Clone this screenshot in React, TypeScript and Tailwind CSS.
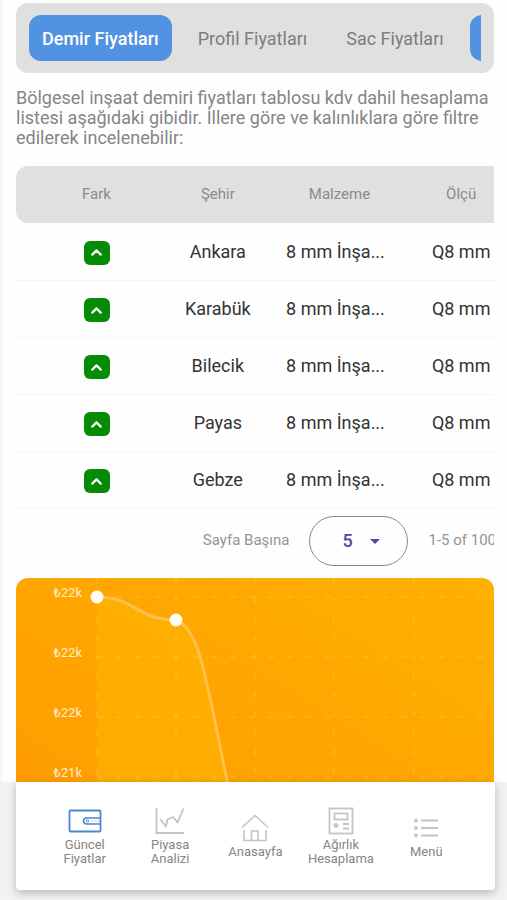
import { useState } from 'react';
import { ChevronUp } from 'lucide-react';

const tabs = ['Demir Fiyatları', 'Profil Fiyatları', 'Sac Fiyatları'];

const rows = [
  { city: 'Ankara', material: '8 mm İnşa...', size: 'Q8 mm' },
  { city: 'Karabük', material: '8 mm İnşa...', size: 'Q8 mm' },
  { city: 'Bilecik', material: '8 mm İnşa...', size: 'Q8 mm' },
  { city: 'Payas', material: '8 mm İnşa...', size: 'Q8 mm' },
  { city: 'Gebze', material: '8 mm İnşa...', size: 'Q8 mm' },
];

const chartLabels = [
  { y: 18, text: '₺22k' },
  { y: 78, text: '₺22k' },
  { y: 138, text: '₺22k' },
  { y: 198, text: '₺21k' },
];

function WalletIcon() {
  return (
    <svg width="34" height="24" viewBox="0 0 34 24" fill="none" stroke="#4a87d0" strokeWidth="1.8">
      <rect x="1.5" y="1.5" width="31" height="21" rx="1" />
      <path d="M32 9H18.500a3 3 0 0 0 0 6H32" strokeWidth="1.6" />
      <circle cx="19.500" cy="12" r="1.200" strokeWidth="0.9" />
      <path d="M23 12h9" strokeWidth="0.8" strokeOpacity="0.4" />
    </svg>
  );
}

function ChartIcon() {
  return (
    <svg width="30" height="26" viewBox="0 0 30 26" fill="none" stroke="#c4c4c4" strokeWidth="1.8">
      <path d="M1.5 0v25H29" />
      <path d="M5 11l6 7.500 1.500-7 5.500-2.500 4.500 5.500L28.500 0.500" strokeLinejoin="round" />
    </svg>
  );
}

function HomeIcon() {
  return (
    <svg width="28" height="28" viewBox="0 0 28 28" fill="none" stroke="#c4c4c4" strokeWidth="1.6">
      <path d="M1 13.500L14 1.500l13 12" />
      <path d="M3 16V26.500H25V16" />
      <path d="M10.500 26.500V17h6.500v9.500" />
    </svg>
  );
}

function CalculatorIcon() {
  return (
    <svg width="26" height="28" viewBox="0 0 26 28" fill="none" stroke="#c4c4c4" strokeWidth="1.8">
      <rect x="1.500" y="1.500" width="23" height="25" />
      <rect x="6.500" y="6.500" width="13" height="6" />
      <path d="M15 17h6M15 21.500h6" />
      <path d="M8 16v5M5.500 18.500h5" strokeWidth="2.400" />
    </svg>
  );
}

function MenuIcon() {
  return (
    <svg width="26" height="20" viewBox="0 0 26 20" fill="none" stroke="#c4c4c4" strokeWidth="1.8">
      <path d="M8 2.500h17M8 10h17M8 17.500h17" />
      <g fill="#c4c4c4" stroke="none">
        <circle cx="3" cy="2.500" r="1.900" />
        <circle cx="3" cy="10" r="1.900" />
        <circle cx="3" cy="17.500" r="1.900" />
      </g>
    </svg>
  );
}

const navItems = [
  { label: ['Güncel', 'Fiyatlar'], icon: <WalletIcon /> },
  { label: ['Piyasa', 'Analizi'], icon: <ChartIcon /> },
  { label: ['Anasayfa'], icon: <HomeIcon /> },
  { label: ['Ağırlık', 'Hesaplama'], icon: <CalculatorIcon /> },
  { label: ['Menü'], icon: <MenuIcon /> },
];

function PriceChart() {
  return (
    <svg viewBox="0 0 478 300" className="block w-full rounded-xl" role="img" aria-label="Fiyat grafiği">
      <defs>
        <linearGradient id="bg" x1="0" y1="1" x2="1" y2="0">
          <stop offset="0" stopColor="#ff9800" />
          <stop offset="0.5" stopColor="#ffa500" />
          <stop offset="1" stopColor="#ffb000" />
        </linearGradient>
      </defs>
      <rect width="478" height="300" fill="url(#bg)" />
      <path
        d="M81 19C120 19 120 42 160 42C184 50 190 102 213 212L230 300H81Z"
        fill="#ffb800"
        fillOpacity="0.5"
      />
      <g stroke="#ffe0a0" strokeOpacity="0.35" strokeDasharray="6 13">
        {[19, 79, 139, 199, 259].map((y) => (
          <path key={y} d={`M81 ${y}H478`} />
        ))}
        {[81, 160, 239, 318, 398].map((x) => (
          <path key={x} d={`M${x} 0V300`} />
        ))}
      </g>
      <path
        d="M81 19C120 19 120 42 160 42C184 50 190 102 213 212L230 300"
        fill="none"
        stroke="#ffc04d"
        strokeWidth="3"
      />
      <circle cx="81" cy="19" r="6.500" fill="#fffdf4" />
      <circle cx="160" cy="42" r="6.500" fill="#fffdf4" />
      <g className="font-['Roboto',sans-serif] text-[13px]" fill="#ffefcf" textAnchor="end">
        {chartLabels.map((label) => (
          <text key={label.y} x="66" y={label.y + 1}>
            {label.text}
          </text>
        ))}
      </g>
    </svg>
  );
}

export default function App() {
  const [activeTab, setActiveTab] = useState(0);
  const [activeNav, setActiveNav] = useState(0);
  const [pageSize, setPageSize] = useState('5');

  return (
    <div className="flex h-screen flex-col bg-[#f3f3f3] font-['Roboto',sans-serif]">
      <main className="min-h-0 flex-1 overflow-hidden border-l-2 border-[#f6f6f6] bg-[#fefefe] pt-[3px] pr-[13px] pl-[14px]">
        {/* Price tabs */}
        <div className="rounded-xl bg-[#e0e0e0] px-[13px] py-3">
          <div className="flex gap-[13px] overflow-hidden">
            {tabs.map((tab, i) => (
              <button
                key={tab}
                onClick={() => setActiveTab(i)}
                className={`h-[46px] shrink-0 rounded-xl px-[13px] text-[18px] ${
                  activeTab === i ? 'bg-[#5192e2] font-medium text-white' : 'text-[#7d7d7d]'
                }`}
              >
                {tab}
              </button>
            ))}
            <button aria-label="Diğer fiyatlar" className="h-[46px] w-[120px] shrink-0 rounded-xl bg-[#5192e2]" />
          </div>
        </div>

        <p className="mt-[15px] text-[18px] leading-5 text-[#858585]">
          Bölgesel inşaat demiri fiyatları tablosu kdv dahil hesaplama listesi aşağıdaki gibidir. İllere göre ve
          kalınlıklara göre filtre edilerek incelenebilir:
        </p>

        {/* Price table */}
        <div className="mt-[18px] overflow-x-auto [scrollbar-width:none]">
          <table className="w-full min-w-[506px] table-fixed text-center">
            <thead>
              <tr className="h-[57px] text-[15px] text-[#8b8b8b]">
                <th className="w-[141px] rounded-l-xl bg-[#e0e0e0] pl-5 font-normal">Fark</th>
                <th className="bg-[#e0e0e0] font-normal">Şehir</th>
                <th className="bg-[#e0e0e0] font-normal">Malzeme</th>
                <th className="rounded-r-xl bg-[#e0e0e0] font-normal">Ölçü</th>
              </tr>
            </thead>
            <tbody>
              {rows.map((row) => (
                <tr key={row.city} className="h-[57px] border-b border-[#f4f4f4] text-[18px] text-[#333]">
                  <td className="pl-5">
                    <span className="inline-flex h-6 w-[26px] items-center justify-center rounded-md bg-[#058b05] align-middle">
                      <ChevronUp size={17} strokeWidth={3} className="text-white" />
                    </span>
                  </td>
                  <td>{row.city}</td>
                  <td className="pr-2 whitespace-nowrap">{row.material}</td>
                  <td>{row.size}</td>
                </tr>
              ))}
            </tbody>
          </table>

          <div className="flex min-w-[506px] items-center justify-end pt-[7px] pb-2 pr-[26px] text-[15px] whitespace-nowrap text-[#949494]">
            <label htmlFor="page-size">Sayfa Başına</label>
            <div className="relative mx-5">
              <select
                id="page-size"
                value={pageSize}
                onChange={(e) => setPageSize(e.target.value)}
                className="h-[50px] w-[99px] appearance-none rounded-full border border-[#888] bg-transparent pl-8 text-[18px] font-medium text-[#5546a0]"
              >
                <option>5</option>
                <option>10</option>
                <option>20</option>
              </select>
              <svg
                width="10"
                height="5"
                viewBox="0 0 10 5"
                className="pointer-events-none absolute top-[23px] right-7"
                fill="#5546a0"
              >
                <path d="M0 0h10L5 5z" />
              </svg>
            </div>
            <span>1-5 of 100</span>
          </div>
        </div>

        <div className="mt-1">
          <PriceChart />
        </div>
      </main>

      {/* Bottom navigation */}
      <footer className="pr-[12px] pb-[10px] pl-4">
        <nav className="grid h-[108px] grid-cols-5 items-center rounded-b bg-white px-[26px] shadow-[0_3px_10px_rgba(0,0,0,0.25)]">
          {navItems.map((item, i) => (
            <button
              key={item.label[0]}
              onClick={() => setActiveNav(i)}
              aria-current={activeNav === i ? 'page' : undefined}
              className="flex flex-col items-center gap-[3px] text-[13px] leading-[14px] text-[#858585]"
            >
              <span className="flex h-7 items-center">{item.icon}</span>
              <span>
                {item.label.map((line) => (
                  <span key={line} className="block">
                    {line}
                  </span>
                ))}
              </span>
            </button>
          ))}
        </nav>
      </footer>
    </div>
  );
}
